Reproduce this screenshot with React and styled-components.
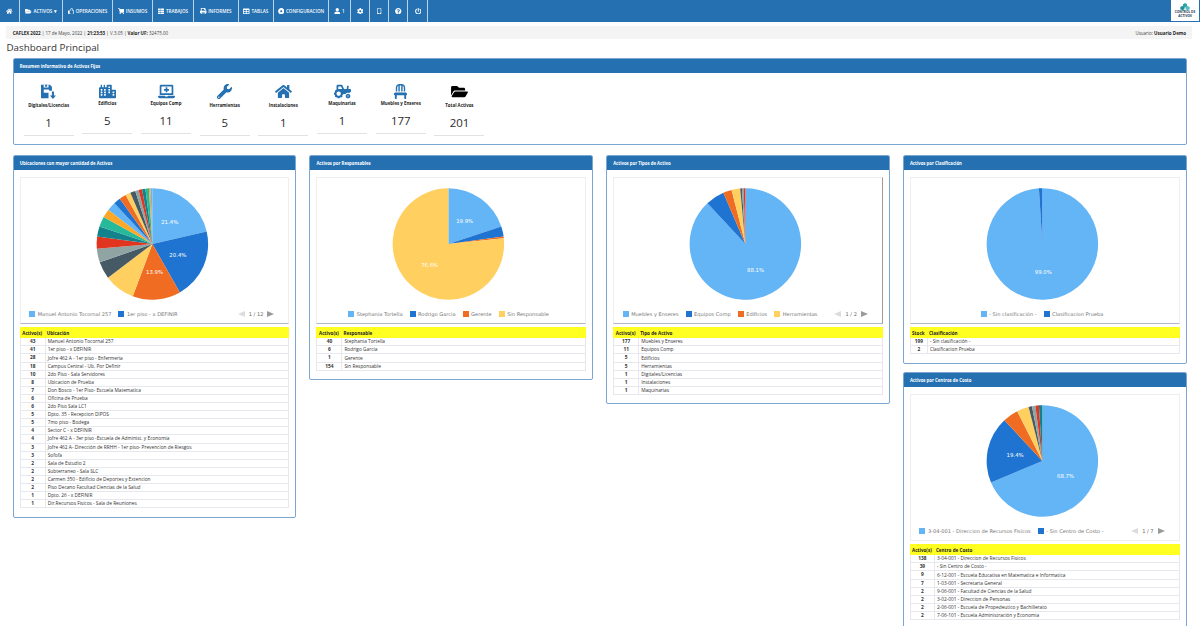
import React from 'react';
import styled, { createGlobalStyle } from 'styled-components';
import {
  FaHome, FaFolderOpen, FaRegThumbsUp, FaShoppingCart, FaThList, FaPrint, FaTable,
  FaCog, FaUser, FaQuestionCircle, FaPowerOff, FaCity, FaLaptopMedical, FaWrench,
  FaTractor, FaChair, FaMobileAlt, FaDotCircle,
} from 'react-icons/fa';

const COLORS = ['#64b5f6', '#1e74d0', '#ef6c22', '#ffcf60', '#455a64', '#90a4a4', '#e2351f', '#13828c', '#26b99a', '#ffa726'];

const navItems = [
  { w: 20, icon: <FaHome /> },
  { w: 43, icon: <FaFolderOpen />, label: 'ACTIVOS ▾' },
  { w: 50, icon: <FaRegThumbsUp />, label: 'OPERACIONES' },
  { w: 40, icon: <FaShoppingCart />, label: 'INSUMOS' },
  { w: 41, icon: <FaThList />, label: 'TRABAJOS' },
  { w: 44.7, icon: <FaPrint />, label: 'INFORMES' },
  { w: 35.3, icon: <FaTable />, label: 'TABLAS' },
  { w: 55, icon: <FaDotCircle />, label: 'CONFIGURACION' },
  { w: 21.7, icon: <FaUser />, label: '1' },
  { w: 19.6, icon: <FaCog /> },
  { w: 19, icon: <FaMobileAlt /> },
  { w: 19, icon: <FaQuestionCircle /> },
  { w: 20, icon: <FaPowerOff /> },
];

const summary = [
  { label: 'Digitales/Licencias', value: 1, low: true, icon: <SaveArrow /> },
  { label: 'Edificios', value: 5, icon: <FaCity /> },
  { label: 'Equipos Comp', value: 11, icon: <FaLaptopMedical /> },
  { label: 'Herramientas', value: 5, low: true, icon: <FaWrench /> },
  { label: 'Instalaciones', value: 1, low: true, icon: <FaHome /> },
  { label: 'Maquinarias', value: 1, icon: <FaTractor /> },
  { label: 'Muebles y Enseres', value: 177, icon: <FaChair /> },
  { label: 'Total Activos', value: 201, low: true, black: true, icon: <FaFolderOpen /> },
];

const ubicaciones = [
  [43, 'Manuel Antonio Tocornal 257'],
  [41, '1er piso - x DEFINIR'],
  [28, 'Jofre 462 A - 1er piso - Enfermeria'],
  [18, 'Campus Central - Ub. Por Definir'],
  [10, '2do Piso - Sala Servidores'],
  [8, 'Ubicacion de Prueba'],
  [7, 'Don Bosco - 1er Piso- Escuela Matematica'],
  [6, 'Oficina de Prueba'],
  [6, '2do Piso Sala LC1'],
  [5, 'Dpto. 35 - Recepcion DIPOS'],
  [5, '7mo piso - Bodega'],
  [4, 'Sector C - x DEFINIR'],
  [4, 'Jofre 462 A - 3er piso -Escuela de Administ. y Economia'],
  [3, 'Jofre 462 A- Dirección de RRHH - 1er piso- Prevencion de Riesgos'],
  [3, 'Sofofa'],
  [2, 'Sala de Estudio 2'],
  [2, 'Subterraneo - Sala SLC'],
  [2, 'Carmen 350 - Edificio de Deportes y Extencion'],
  [2, 'Piso Decano Facultad Ciencias de la Salud'],
  [1, 'Dpto. 26 - x DEFINIR'],
  [1, 'Dir.Recursos Fisicos - Sala de Reuniones'],
];

const responsables = [
  [40, 'Stephania Tortella'],
  [6, 'Rodrigo Garcia'],
  [1, 'Gerente'],
  [154, 'Sin Responsable'],
];

const tipos = [
  [177, 'Muebles y Enseres'],
  [11, 'Equipos Comp'],
  [5, 'Edificios'],
  [5, 'Herramientas'],
  [1, 'Digitales/Licencias'],
  [1, 'Instalaciones'],
  [1, 'Maquinarias'],
];

const clasificaciones = [
  [199, '- Sin clasificación -'],
  [2, 'Clasificacion Prueba'],
];

const centros = [
  [138, '3-04-001 - Direccion de Recursos Fisicos'],
  [39, '- Sin Centro de Costo -'],
  [9, '6-12-001 - Escuela Educativa en Matematica e Informatica'],
  [7, '1-03-001 - Secretaria General'],
  [2, '9-06-001 - Facultad de Ciencias de la Salud'],
  [2, '3-02-001 - Direccion de Personas'],
  [2, '2-06-001 - Escuela de Propedeutico y Bachillerato'],
  [2, '7-06-101 - Escuela Administración y Economia'],
];

function SaveArrow() {
  return (
    <svg viewBox="1 1 22 22" fill="currentColor">
      <path d="M1 2h13l3 3v6h-4V9H5v5h7v8H2a1 1 0 0 1-1-1z" />
      <path d="M5 2h7v4H5z" fill="#fff" />
      <path d="M7 2h3v3H7z" />
      <path d="M17 12h3v6h3l-4.5 5-4.5-5h3z" />
    </svg>
  );
}

const slicePath = (cx, cy, r, from, to) => {
  const a0 = ((from - 90) * Math.PI) / 180;
  const a1 = ((to - 90) * Math.PI) / 180;
  const big = to - from > 180 ? 1 : 0;
  return `M${cx} ${cy}L${cx + r * Math.cos(a0)} ${cy + r * Math.sin(a0)}A${r} ${r} 0 ${big} 1 ${cx + r * Math.cos(a1)} ${cy + r * Math.sin(a1)}Z`;
};

const Pie = ({ values }) => {
  const total = values.reduce((a, b) => a + b, 0);
  const cx = 132;
  const cy = 66;
  const r = 56;
  let angle = 0;
  return (
    <PieSvg viewBox="0 0 269 127">
      {values.map((v, i) => {
        const from = angle;
        const to = angle + (v / total) * 360;
        angle = to;
        const mid = (((from + to) / 2 - 90) * Math.PI) / 180;
        const pct = (v / total) * 100;
        return (
          <g key={i}>
            <path d={slicePath(cx, cy, r, from, to)} fill={COLORS[i % COLORS.length]} />
            {pct >= 10 && (
              <PieLabel x={cx + 28 * Math.cos(mid)} y={cy + 28 * Math.sin(mid) + 2}>
                {pct.toFixed(1)}%
              </PieLabel>
            )}
          </g>
        );
      })}
    </PieSvg>
  );
};

const ChartPanel = ({ title, head, rows, col, legend, pager, values, edge, flat }) => (
  <Panel>
    <PanelHeader>{title}</PanelHeader>
    <PanelBody>
      <ChartBox $edge={edge} $flat={flat}>
        <Pie values={values} />
        <Legend $split={!!pager}>
          <LegendItems>
            {legend.map((name, i) => (
              <LegendItem key={name}>
                <Swatch $color={COLORS[i]} />
                {name}
              </LegendItem>
            ))}
          </LegendItems>
          {pager && (
            <Pager>
              <Arrow $left />
              {pager}
              <Arrow />
            </Pager>
          )}
        </Legend>
      </ChartBox>
      <TableHead $col={col}>
        <span>{head[0]}</span>
        <span>{head[1]}</span>
      </TableHead>
      {rows.map(([n, name]) => (
        <TableRow key={name} $col={col}>
          <b>{n}</b>
          <span>{name}</span>
        </TableRow>
      ))}
    </PanelBody>
  </Panel>
);

export default function App() {
  return (
    <>
      <GlobalStyle />
      <NavBar>
        <NavList>
          {navItems.map((item, i) => (
            <NavItem key={i} $w={item.w}>
              {item.icon}
              {item.label && <span>{item.label}</span>}
            </NavItem>
          ))}
        </NavList>
        <Logo>
          <svg viewBox="0 0 24 12" width="14" height="9">
            <path d="M12 0l3.5 2v4L12 8 8.5 6V2z" fill="#2aa6a8" />
            <path d="M7.5 5L11 7v4l-3.5 1L4 11V7z" fill="#1f8f9a" />
            <path d="M16.5 5L20 7v4l-3.5 1-3.500-1V7z" fill="#55bfc4" />
          </svg>
          <LogoText>CONTROL DE ACTIVOS</LogoText>
        </Logo>
      </NavBar>
      <InfoBar>
        <span>
          <b>CAFLEX 2022</b> | 17 de Mayo, 2022 | <b>21:23:53</b> | V.3.05 | <b>Valor UF:</b> 32475.00
        </span>
        <span>
          Usuario: <b>Usuario Demo</b>
        </span>
      </InfoBar>
      <Title>Dashboard Principal</Title>
      <Content>
        <Panel>
          <PanelHeader>Resumen informativo de Activos Fijos</PanelHeader>
          <SummaryRow>
            {summary.map((s) => (
              <SummaryItem key={s.label}>
                <SummaryIcon $black={s.black}>{s.icon}</SummaryIcon>
                <SummaryLabel $low={s.low}>{s.label}</SummaryLabel>
                <SummaryValue>{s.value}</SummaryValue>
                <SummaryBar />
              </SummaryItem>
            ))}
          </SummaryRow>
        </Panel>
        <Columns>
          <ChartPanel
            title="Ubicaciones con mayor cantidad de Activos"
            head={['Activo(s)', 'Ubicación']}
            col={25}
            rows={ubicaciones}
            values={ubicaciones.map((r) => r[0])}
            legend={['Manuel Antonio Tocornal 257', '1er piso - x DEFINIR']}
            pager="1 / 12"
          />
          <ChartPanel
            title="Activos por Responsables"
            head={['Activo(s)', 'Responsable']}
            col={25}
            rows={responsables}
            values={responsables.map((r) => r[0])}
            legend={['Stephania Tortella', 'Rodrigo Garcia', 'Gerente', 'Sin Responsable']}
          />
          <ChartPanel
            title="Activos por Tipos de Activo"
            head={['Activo(s)', 'Tipo de Activo']}
            col={25}
            rows={tipos}
            values={tipos.map((r) => r[0])}
            legend={['Muebles y Enseres', 'Equipos Comp', 'Edificios', 'Herramientas']}
            pager="1 / 2"
            edge
          />
          <SideColumn>
            <ChartPanel
              title="Activos por Clasificación"
              head={['Stock', 'Clasificación']}
              col={17}
              rows={clasificaciones}
              values={clasificaciones.map((r) => r[0])}
              legend={['- Sin clasificación -', 'Clasificacion Prueba']}
            />
            <ChartPanel
              title="Activos por Centros de Costo"
              head={['Activo(s)', 'Centro de Costo']}
              col={24}
              rows={centros}
              values={centros.map((r) => r[0])}
              legend={['3-04-001 - Direccion de Recursos Fisicos', '- Sin Centro de Costo -']}
              pager="1 / 7"
              flat
            />
          </SideColumn>
        </Columns>
      </Content>
    </>
  );
}

const GlobalStyle = createGlobalStyle`
  html, body {
    margin: 0;
    height: 626px;
    overflow: hidden;
    background: #fff;
    font-family: "Open Sans", "Liberation Sans", sans-serif;
    color: #333;
  }
`;

const NavBar = styled.div`
  display: flex;
  justify-content: space-between;
  height: 22px;
  background: #2470b1;
`;

const NavList = styled.div`
  display: flex;
`;

const NavItem = styled.div`
  display: flex;
  align-items: center;
  justify-content: center;
  gap: 1.5px;
  box-sizing: border-box;
  width: ${(p) => p.$w}px;
  border-right: 0.7px solid #b9d3ea;
  color: #fff;
  font-size: 4.6px;
  font-weight: 600;

  svg {
    width: 6.5px;
    height: 6.5px;
    flex: none;
  }
`;

const Logo = styled.div`
  display: flex;
  flex-direction: column;
  align-items: center;
  width: 28px;
  height: 21px;
  margin-right: 1px;
  padding-top: 2px;
  box-sizing: border-box;
  background: #fff;
`;

const LogoText = styled.div`
  width: 22px;
  color: #1d3a52;
  font-size: 3.2px;
  font-weight: 700;
  line-height: 3.6px;
  text-align: center;
`;

const InfoBar = styled.div`
  display: flex;
  justify-content: space-between;
  align-items: center;
  height: 13px;
  margin: 4px 8px 0 6px;
  padding: 0 6px 0 6.7px;
  background: #f4f4f4;
  font-size: 4.5px;
  color: #444;

  b {
    color: #222;
  }
`;

const Title = styled.h1`
  margin: 1px 0 0 6.5px;
  height: 16px;
  font-size: 9.8px;
  font-weight: 400;
  line-height: 16px;
  color: #333;
`;

const Content = styled.div`
  display: flex;
  flex-direction: column;
  gap: 10px;
  margin: 2px 13.4px 0 12.7px;
`;

const Columns = styled.div`
  display: grid;
  grid-template-columns: repeat(4, 1fr);
  gap: 13px;
  align-items: start;
`;

const SideColumn = styled.div`
  display: flex;
  flex-direction: column;
  gap: 8px;
`;

const Panel = styled.section`
  border: 0.7px solid #7ba6d2;
  border-radius: 2px;
  overflow: hidden;
  background: #fff;
`;

const PanelHeader = styled.header`
  height: 14.3px;
  padding-left: 6px;
  background: #2470b1;
  color: #fff;
  font-size: 4.3px;
  font-weight: 700;
  line-height: 14.3px;
`;

const PanelBody = styled.div`
  padding: 7px 6px 8.5px;
`;

const SummaryRow = styled.div`
  display: flex;
  height: 70.7px;
  padding: 11px 0 0 5.6px;
  box-sizing: border-box;
`;

const SummaryItem = styled.div`
  display: flex;
  flex-direction: column;
  align-items: center;
  width: 58.7px;
`;

const SummaryIcon = styled.div`
  width: 17px;
  height: 15px;
  color: ${(p) => (p.$black ? '#000' : '#2470b1')};

  svg {
    width: 100%;
    height: 100%;
    display: block;
  }
`;

const SummaryLabel = styled.div`
  margin-top: ${(p) => (p.$low ? 3 : 1)}px;
  color: #222;
  font-size: 4.4px;
  font-weight: 700;
  line-height: 6px;
  white-space: nowrap;
`;

const SummaryValue = styled.div`
  margin-top: 7px;
  color: #2a2a2a;
  font-size: 11.4px;
  line-height: 16px;
`;

const SummaryBar = styled.div`
  width: 50px;
  height: 1.2px;
  margin-top: 3.5px;
  background: #e2e2e2;
`;

const ChartBox = styled.div`
  height: 147px;
  box-sizing: border-box;
  border: 1px solid #eeeeee;
  border-bottom-color: ${(p) => (p.$flat ? '#eeeeee' : '#aeb6c6')};
  border-right-color: ${(p) => (p.$edge ? '#9a9a9a' : '#eeeeee')};
`;

const PieSvg = styled.svg`
  display: block;
  width: 100%;
  height: 127px;
`;

const PieLabel = styled.text`
  fill: #fff;
  font-family: "DejaVu Sans", sans-serif;
  font-size: 5.4px;
  text-anchor: middle;
`;

const Legend = styled.div`
  display: flex;
  align-items: center;
  justify-content: ${(p) => (p.$split ? 'space-between' : 'center')};
  height: 18px;
  padding: 0 14px 0 8.5px;
  font-family: "DejaVu Sans", sans-serif;
  font-size: 5.1px;
  color: #777;
`;

const LegendItems = styled.div`
  display: flex;
  gap: 7px;
`;

const LegendItem = styled.div`
  display: flex;
  align-items: center;
  gap: 2.5px;
  white-space: nowrap;
`;

const Swatch = styled.i`
  width: 6px;
  height: 6px;
  background: ${(p) => p.$color};
`;

const Pager = styled.div`
  display: flex;
  align-items: center;
  gap: 4px;
  color: #666;
`;

const Arrow = styled.i`
  width: 0;
  height: 0;
  border-top: 3.5px solid transparent;
  border-bottom: 3.5px solid transparent;
  border-left: ${(p) => (p.$left ? '0' : '7px solid #9a9a9a')};
  border-right: ${(p) => (p.$left ? '7px solid #dcdcdc' : '0')};
`;

const TableHead = styled.div`
  display: grid;
  grid-template-columns: ${(p) => p.$col}px 1fr;
  align-items: center;
  height: 11.5px;
  margin-top: 2.5px;
  background: #ffff22;
  color: #222;
  font-size: 4.6px;
  font-weight: 700;

  span:first-child {
    text-align: center;
  }

  span:last-child {
    padding-left: 2px;
  }
`;

const TableRow = styled.div`
  display: grid;
  grid-template-columns: ${(p) => p.$col}px 1fr;
  align-items: center;
  height: 8.1px;
  box-sizing: border-box;
  border: solid #e6e8ee;
  border-width: 0 0.6px 0.6px;
  color: #333;
  font-size: 4.8px;
  line-height: 7px;

  b {
    height: 100%;
    border-right: 0.6px solid #e6e8ee;
    text-align: center;
  }

  span {
    padding-left: 2px;
    white-space: nowrap;
  }
`;
